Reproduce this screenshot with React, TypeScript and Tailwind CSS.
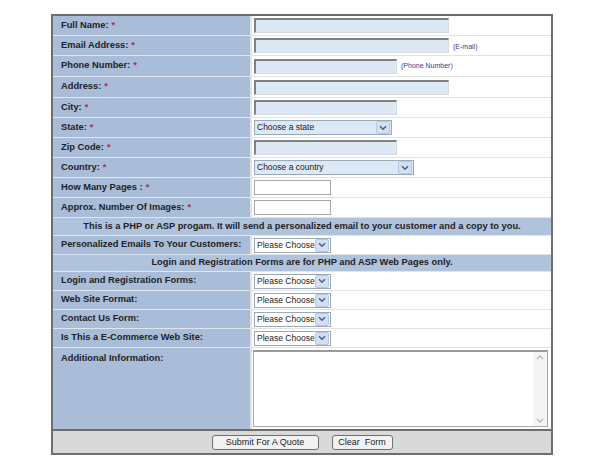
import React from "react"

const FONT = { fontFamily: '"Liberation Sans", Arial, sans-serif' }

function Arrow() {
  return (
    <span className="flex h-[13px] w-[14px] shrink-0 items-center justify-center rounded-[2px] border border-[#b7c8e6] bg-[#d3e0f4]">
      <svg width="8" height="6" viewBox="0 0 8 6">
        <path d="M1 1.2 L4 4.2 L7 1.2" stroke="#4d6185" strokeWidth="1.6" fill="none" />
      </svg>
    </span>
  )
}

function TextBox({ w, tint = true }: { w: number; tint?: boolean }) {
  return (
    <span
      className={
        tint
          ? "block h-[15px] border-t-2 border-l-2 border-r border-b border-t-[#808080] border-l-[#808080] border-r-[#d4dbe4] border-b-[#d4dbe4] bg-[#dde8f5]"
          : "block h-[15px] border border-[#a7a7a7] bg-white"
      }
      style={{ width: w }}
    />
  )
}

function Select({ w, text, tint = false }: { w: number; text: string; tint?: boolean }) {
  return (
    <span
      className={
        "flex h-[15px] items-center justify-between border border-[#9aa8bb] pl-[2px] pr-[1px] text-[8.5px] text-[#222] " +
        (tint ? "bg-[#dde8f5]" : "bg-white")
      }
      style={{ width: w }}
    >
      <span>{text}</span>
      <Arrow />
    </span>
  )
}

function Star() {
  return <span className="ml-[3px] text-[#b8285a]">*</span>
}

type Row = { label: string; req?: boolean; h: number; field: React.ReactNode }

const top: Row[] = [
  { label: "Full Name:", req: true, h: 20, field: <TextBox w={195} /> },
  {
    label: "Email Address:",
    req: true,
    h: 20,
    field: (
      <>
        <TextBox w={195} />
        <span className="ml-[4px] mt-[3px] text-[7px] text-[#3a3a8c]">(E-mail)</span>
      </>
    ),
  },
  {
    label: "Phone Number:",
    req: true,
    h: 21,
    field: (
      <>
        <TextBox w={143} />
        <span className="ml-[4px] text-[7px] text-[#3a3a8c]">(Phone Number)</span>
      </>
    ),
  },
  { label: "Address:", req: true, h: 21, field: <TextBox w={195} /> },
  { label: "City:", req: true, h: 20, field: <TextBox w={143} /> },
  { label: "State:", req: true, h: 20, field: <Select w={138} text="Choose a state" tint /> },
  { label: "Zip Code:", req: true, h: 20, field: <TextBox w={143} /> },
  { label: "Country:", req: true, h: 20, field: <Select w={160} text="Choose a country" tint /> },
  { label: "How Many Pages :", req: true, h: 20, field: <TextBox w={77} tint={false} /> },
  { label: "Approx. Number Of Images:", req: true, h: 20, field: <TextBox w={77} tint={false} /> },
]

const choose = <Select w={77} text="Please Choose" />

const lower: Row[] = [
  { label: "Login and Registration Forms:", h: 19, field: choose },
  { label: "Web Site Format:", h: 19, field: choose },
  { label: "Contact Us Form:", h: 19, field: choose },
  { label: "Is This a E-Commerce Web Site:", h: 19, field: choose },
]

function FormRow({ row }: { row: Row }) {
  return (
    <div className="flex" style={{ height: row.h }}>
      <div className="flex w-[197px] items-center border-b border-[#dfe6ef] bg-[#a9bcd8] pl-[8px] text-[9.3px] font-bold text-[#222]">
        {row.label}
        {row.req && <Star />}
      </div>
      <div className="flex flex-1 items-center border-b border-l-2 border-b-[#e2e2e2] border-l-[#e4e4e4] bg-white pl-[2px]">
        {row.field}
      </div>
    </div>
  )
}

function Banner({ text, h }: { text: string; h: number }) {
  return (
    <div
      className="flex items-center justify-center border-b border-[#dfe6ef] bg-[#b0c3dd] text-[9.3px] font-bold text-[#222]"
      style={{ height: h }}
    >
      {text}
    </div>
  )
}

export default function App() {
  return (
    <div className="min-h-[462px] bg-white pt-[14px]" style={FONT}>
      <div className="ml-[51px] w-[502px] border-2 border-[#6e6e6e]">
        {top.map((r) => (
          <FormRow key={r.label} row={r} />
        ))}
        <Banner
          h={18}
          text="This is a PHP or ASP progam. It will send a personalized email to your customer and a copy to you."
        />
        <FormRow row={{ label: "Personalized Emails To Your Customers:", h: 19, field: choose }} />
        <Banner h={17} text="Login and Registration Forms are for PHP and ASP Web Pages only." />
        {lower.map((r) => (
          <FormRow key={r.label} row={r} />
        ))}
        <div className="flex h-[81px]">
          <div className="w-[197px] bg-[#a9bcd8] pl-[8px] pt-[4px] text-[9.3px] font-bold text-[#222]">
            Additional Information:
          </div>
          <div className="flex flex-1 border-l-2 border-[#e4e4e4] bg-white pb-[2px] pl-[1px] pr-[3px] pt-[2px]">
            <div className="flex flex-1 border border-t-2 border-[#a9a9a9] border-t-[#9a9a9a]">
              <div className="flex-1" />
              <div className="flex w-[14px] flex-col items-center justify-between bg-[#f4f4f4] py-[3px]">
                <svg width="8" height="5" viewBox="0 0 8 5">
                  <path d="M1 4 L4 1 L7 4" stroke="#b5b5b5" strokeWidth="1.3" fill="none" />
                </svg>
                <svg width="8" height="5" viewBox="0 0 8 5">
                  <path d="M1 1 L4 4 L7 1" stroke="#b5b5b5" strokeWidth="1.3" fill="none" />
                </svg>
              </div>
            </div>
          </div>
        </div>
        <div className="flex h-[24px] items-center justify-center gap-[13px] border-t-2 border-[#6e6e6e] bg-[#d9d9d9]">
          <button className="h-[15px] w-[107px] rounded-[3px] border border-[#707070] bg-[#f2f2f2] text-[9px] leading-none text-[#222]">
            Submit For A Quote
          </button>
          <button className="h-[15px] w-[61px] rounded-[3px] border border-[#707070] bg-[#f2f2f2] text-[9px] leading-none text-[#222]">
            Clear&nbsp; Form
          </button>
        </div>
      </div>
    </div>
  )
}
